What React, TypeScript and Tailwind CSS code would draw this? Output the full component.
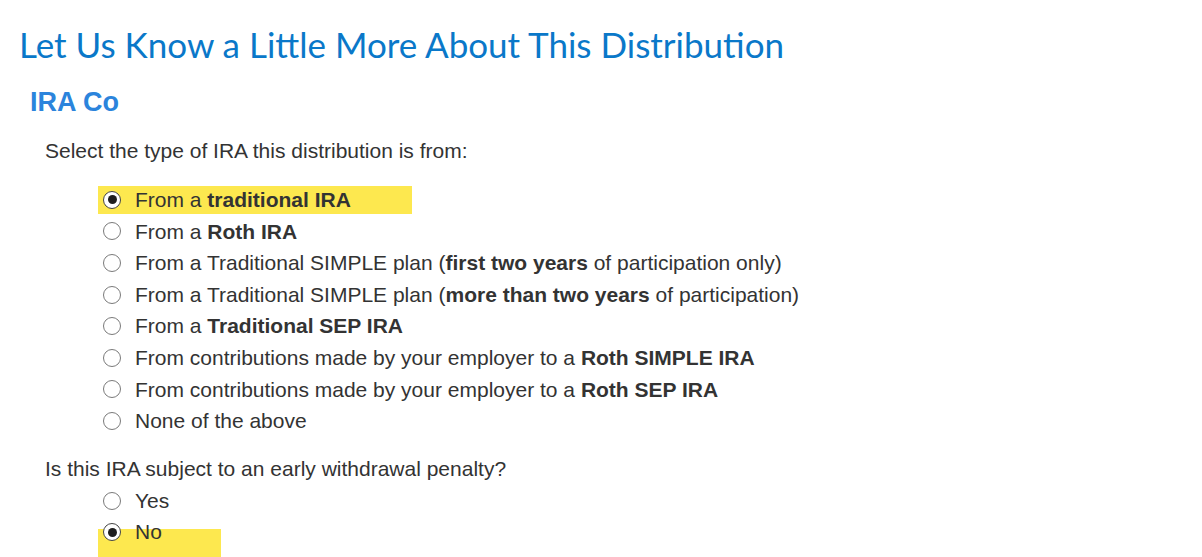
import type { ReactNode } from "react";

type Option = {
  label: ReactNode;
  checked?: boolean;
};

const iraOptions: Option[] = [
  { label: <>From a <b>traditional IRA</b></>, checked: true },
  { label: <>From a <b>Roth IRA</b></> },
  { label: <>From a Traditional SIMPLE plan (<b>first two years</b> of participation only)</> },
  { label: <>From a Traditional SIMPLE plan (<b>more than two years</b> of participation)</> },
  { label: <>From a <b>Traditional SEP IRA</b></> },
  { label: <>From contributions made by your employer to a <b>Roth SIMPLE IRA</b></> },
  { label: <>From contributions made by your employer to a <b>Roth SEP IRA</b></> },
  { label: <>None of the above</> },
];

function Radio({ checked }: { checked?: boolean }) {
  return (
    <span
      className={
        "flex h-[18px] w-[18px] shrink-0 items-center justify-center rounded-full border-[1.5px] bg-white " +
        (checked ? "border-[#444]" : "border-[#7a7a7a]")
      }
    >
      {checked && <span className="h-[9px] w-[9px] rounded-full bg-[#1e1e1e]" />}
    </span>
  );
}

function Row({ option, mark }: { option: Option; mark?: "inline" | "below" }) {
  return (
    <div className="relative flex h-[31.6px] items-center">
      {mark === "inline" && (
        <span className="absolute left-[-5px] top-[2px] h-[28px] w-[314px] bg-[#fde84f]" />
      )}
      {mark === "below" && (
        <span className="absolute left-[-5px] top-[13px] h-[28px] w-[123px] bg-[#fde84f]" />
      )}
      <label className="relative flex items-center gap-[14px]">
        <Radio checked={option.checked} />
        <span>{option.label}</span>
      </label>
    </div>
  );
}

export default function App() {
  return (
    <div className="h-[557px] overflow-hidden bg-white font-['Liberation_Sans',Arial,sans-serif] text-[21px] text-[#333]">
      <h1 className="pl-[19px] pt-[22px] font-['Lato',sans-serif] text-[35px] leading-[44px] text-[#0a78c9]">
        Let Us Know a Little More About This Distribution
      </h1>
      <h2 className="mt-[21px] pl-[30px] text-[27px] font-bold leading-[30px] text-[#2b84dc]">IRA Co</h2>
      <div className="pl-[45px]">
        <p className="mt-[22px] leading-[24px]">Select the type of IRA this distribution is from:</p>
        <div className="mt-[21px] pl-[58px]">
          {iraOptions.map((o, i) => (
            <Row key={i} option={o} mark={i === 0 ? "inline" : undefined} />
          ))}
        </div>
        <p className="mt-[20px] leading-[24px]">Is this IRA subject to an early withdrawal penalty?</p>
        <div className="mt-[4px] pl-[58px]">
          <Row option={{ label: "Yes" }} />
          <Row option={{ label: "No", checked: true }} mark="below" />
        </div>
      </div>
    </div>
  );
}
